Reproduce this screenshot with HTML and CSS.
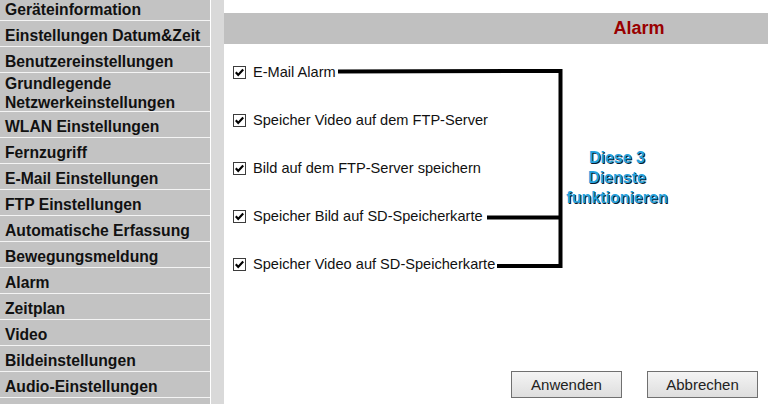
FILE: index.html
```html
<!DOCTYPE html>
<html lang="de">
<head>
<meta charset="utf-8">
<title>Alarm</title>
<link rel="stylesheet" href="styles.css">
</head>
<body>
<div class="page">
  <nav class="sidebar">
    <ul class="menu">
      <li>Geräteinformation</li>
      <li>Einstellungen Datum&amp;Zeit</li>
      <li>Benutzereinstellungen</li>
      <li class="double">Grundlegende<br>Netzwerkeinstellungen</li>
      <li>WLAN Einstellungen</li>
      <li>Fernzugriff</li>
      <li>E-Mail Einstellungen</li>
      <li>FTP Einstellungen</li>
      <li>Automatische Erfassung</li>
      <li>Bewegungsmeldung</li>
      <li>Alarm</li>
      <li>Zeitplan</li>
      <li>Video</li>
      <li>Bildeinstellungen</li>
      <li>Audio-Einstellungen</li>
      <li></li>
    </ul>
  </nav>
  <div class="gutter"></div>
  <main class="main">
    <div class="header"><span class="title">Alarm</span></div>
    <ul class="options">
      <li class="opt"><span class="cb"><svg viewBox="0 0 13 13" width="13" height="13"><path d="M2.8 6.3 L5.2 8.9 L10.2 3.6" fill="none" stroke="#000" stroke-width="2.2"/></svg></span>E-Mail Alarm</li>
      <li class="opt"><span class="cb"><svg viewBox="0 0 13 13" width="13" height="13"><path d="M2.8 6.3 L5.2 8.9 L10.2 3.6" fill="none" stroke="#000" stroke-width="2.2"/></svg></span>Speicher Video auf dem FTP-Server</li>
      <li class="opt"><span class="cb"><svg viewBox="0 0 13 13" width="13" height="13"><path d="M2.8 6.3 L5.2 8.9 L10.2 3.6" fill="none" stroke="#000" stroke-width="2.2"/></svg></span>Bild auf dem FTP-Server speichern</li>
      <li class="opt"><span class="cb"><svg viewBox="0 0 13 13" width="13" height="13"><path d="M2.8 6.3 L5.2 8.9 L10.2 3.6" fill="none" stroke="#000" stroke-width="2.2"/></svg></span>Speicher Bild auf SD-Speicherkarte</li>
      <li class="opt"><span class="cb"><svg viewBox="0 0 13 13" width="13" height="13"><path d="M2.8 6.3 L5.2 8.9 L10.2 3.6" fill="none" stroke="#000" stroke-width="2.2"/></svg></span>Speicher Video auf SD-Speicherkarte</li>
    </ul>
    <div class="buttons">
      <button class="btn">Anwenden</button>
      <button class="btn">Abbrechen</button>
    </div>
  </main>
  <svg class="bracket" width="768" height="404" viewBox="0 0 768 404">
    <path d="M338 71.5 L561 71" stroke="#000" stroke-width="4" fill="none"/>
    <path d="M560.5 69 L560.5 268" stroke="#000" stroke-width="4" fill="none"/>
    <path d="M487 217.5 L561 217.5" stroke="#000" stroke-width="4" fill="none"/>
    <path d="M497 266 L561 266" stroke="#000" stroke-width="4" fill="none"/>
  </svg>
  <div class="note">Diese 3<br>Dienste<br>funktionieren</div>
</div>
</body>
</html>
```
FILE: styles.css
```css
* { box-sizing: border-box; }
html, body { margin: 0; padding: 0; background: #fff; }
body { font-family: "Liberation Sans", Arial, sans-serif; }
.page {
  position: relative;
  width: 768px;
  height: 404px;
  overflow: hidden;
  display: flex;
}
.sidebar {
  width: 211px;
  flex: none;
  background: #c3c3c3;
  border-right: 1px solid #fff;
  overflow: hidden;
}
.menu {
  list-style: none;
  margin: -5px 0 0 0;
  padding: 0;
}
.menu li {
  font-size: 15.7px;
  font-weight: bold;
  line-height: 19px;
  color: #111;
  padding: 5px 5px 1px;
  border-bottom: 1px solid #f4f4f4;
  height: 26px;
  white-space: nowrap;
}
.menu li.double {
  height: 39px;
  padding: 1px 5px 0;
}
.gutter {
  width: 13px;
  flex: none;
  background: #d9d9d9;
}
.main {
  flex: 1;
  padding-top: 13px;
  display: flex;
  flex-direction: column;
}
.header {
  height: 31px;
  background: #c0c0c0;
  display: flex;
  align-items: center;
  justify-content: center;
  padding-left: 286px;
}
.title {
  color: #990000;
  font-weight: bold;
  font-size: 18px;
}
.options {
  list-style: none;
  margin: 4px 0 0 0;
  padding: 0 0 0 9px;
}
.opt {
  height: 48px;
  display: flex;
  align-items: center;
  font-size: 14.6px;
  color: #111;
}
.cb {
  width: 13px;
  height: 13px;
  border: 1px solid #3c3c3c;
  background: #fff;
  margin-right: 7px;
  display: flex;
  position: relative;
}
.cb svg { position: absolute; left: -1px; top: -1px; }
.buttons {
  display: flex;
  justify-content: flex-end;
  gap: 25px;
  padding-right: 10px;
  margin-top: 83px;
}
.btn {
  width: 111px;
  height: 27px;
  font-family: "Liberation Sans", Arial, sans-serif;
  font-size: 15px;
  color: #222;
  background: linear-gradient(#f4f4f4, #dedede);
  border: 1px solid #707070;
  border-radius: 0;
  padding: 0;
}
.bracket {
  position: absolute;
  left: 0;
  top: 0;
  pointer-events: none;
}
.note {
  position: absolute;
  left: 557px;
  top: 148px;
  width: 120px;
  text-align: center;
  font-size: 16px;
  font-weight: bold;
  line-height: 20px;
  color: #25a2de;
  text-shadow: 1px 1px 0 #0a1a30;
}
```
